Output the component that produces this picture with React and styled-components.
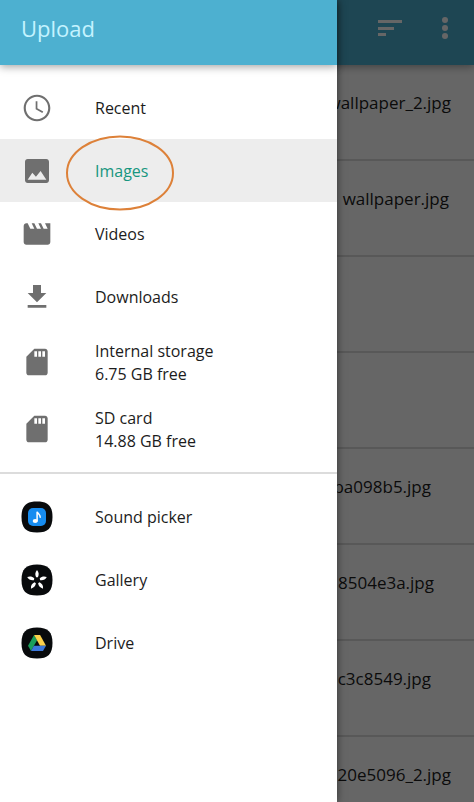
import React from 'react'
import styled, { createGlobalStyle } from 'styled-components'

const GlobalStyle = createGlobalStyle`
  * {
    box-sizing: border-box;
  }

  body {
    margin: 0;
    background: #fff;
    color: #1c1c1c;
    font-family: 'Open Sans', 'Noto Sans', sans-serif;
    font-size: 16px;
  }

  button {
    border: 0;
    padding: 0;
    background: none;
    color: inherit;
    font: inherit;
  }
`

const Screen = styled.div`
  position: relative;
  height: 100vh;
  overflow: hidden;
`

const Bar = styled.header`
  display: flex;
  align-items: center;
  height: 65px;
  padding: 0 20px 9px 21px;
  background: #4db0d0;
  box-shadow: 0 2px 8px rgba(0, 0, 0, 0.35);
  position: relative;
`

const Actions = styled.div`
  display: flex;
  gap: 34px;
  margin-left: auto;
  color: #fff;
`

const IconButton = styled.button`
  display: flex;
  justify-content: center;
  width: ${({ $width }) => $width};
`

const FileList = styled.ul`
  list-style: none;
  margin: 0;
  padding: 0;
`

const FileRow = styled.li`
  height: 96px;
  padding: 26px ${({ $end }) => $end} 0 0;
  border-bottom: 2px solid #dcdcdc;
  font-size: 17px;
  line-height: 24px;
  text-align: right;
`

const Scrim = styled.div`
  position: absolute;
  inset: 0;
  background: rgba(0, 0, 0, 0.6);
`

const Drawer = styled.aside`
  position: absolute;
  top: 0;
  bottom: 0;
  left: 0;
  width: 71.1%;
  background: #fff;
  box-shadow: 0 0 8px rgba(0, 0, 0, 0.5);
`

const Title = styled.h1`
  margin: 0;
  color: #c4f3ff;
  font-size: 22px;
  font-weight: 400;
  line-height: 32px;
`

const Group = styled.nav`
  display: flex;
  flex-direction: column;
  padding: ${({ $pad }) => $pad};

  & + & {
    border-top: 2px solid #dcdcdc;
  }
`

const Item = styled.button`
  display: grid;
  grid-template-columns: 74px 1fr;
  column-gap: 21px;
  align-items: center;
  height: ${({ $tall }) => ($tall ? '67px' : '63px')};
  background: ${({ $active }) => ($active ? '#ededed' : 'transparent')};
  color: ${({ $active }) => ($active ? '#17967f' : '#1c1c1c')};
  line-height: 23px;
  text-align: left;
`

const ItemIcon = styled.span`
  display: flex;
  justify-content: center;
  color: #6f6f6f;
`

const Label = styled.span`
  position: relative;
  justify-self: start;
  padding-top: 2px;
`

const Line = styled.span`
  display: block;
`

const Ring = styled.svg`
  position: absolute;
  top: 50%;
  left: -29px;
  transform: translateY(-50%);
  margin-top: 2px;
  z-index: 1;
  pointer-events: none;
`

const paths = {
  recent:
    'M11.99 2C6.47 2 2 6.48 2 12s4.47 10 9.99 10C17.52 22 22 17.52 22 12S17.52 2 11.99 2zM12 20.4c-4.64 0-8.4-3.76-8.4-8.4S7.36 3.6 12 3.6s8.4 3.76 8.4 8.4-3.76 8.4-8.4 8.4zM12.3 7H11v6l5 2.7.7-1.1-4.4-2.4z',
  images:
    'M21 19V5c0-1.1-.9-2-2-2H5c-1.1 0-2 .9-2 2v14c0 1.1.9 2 2 2h14c1.1 0 2-.9 2-2zM5 18.5l3.5-5.200 2.700 3 3.500-4.300 4.300 6.500z',
  videos:
    'M18 4l2 4h-3l-2-4h-2l2 4h-3l-2-4H8l2 4H7L5 4H4c-1.1 0-1.99.9-1.99 2L2 18c0 1.1.9 2 2 2h16c1.1 0 2-.9 2-2V4h-4z',
  downloads: 'M19 9h-4V3H9v6H5l7 7 7-7zM5 18v2h14v-2H5z',
  storage:
    'M18 2h-8L4.02 8 4 20c0 1.1.9 2 2 2h12c1.1 0 2-.9 2-2V4c0-1.1-.9-2-2-2zm-6 6h-2V4h2v4zm3 0h-2V4h2v4zm3 0h-2V4h2v4z',
}

const Glyph = ({ name }) => (
  <svg width="32" height="32" viewBox="0 0 24 24" fill="currentColor" aria-hidden="true">
    <path d={paths[name]} />
  </svg>
)

const AppTile = ({ children }) => (
  <svg width="32" height="32" viewBox="0 0 32 32" aria-hidden="true">
    <path
      d="M16 .5C27 .5 31.5 5 31.5 16S27 31.5 16 31.5.5 27 .5 16 5 .5 16 .5z"
      fill="#080a0c"
    />
    {children}
  </svg>
)

const SoundIcon = () => (
  <AppTile>
    <rect x="7" y="7" width="18" height="18" rx="5" fill="#168cf0" />
    <ellipse cx="14.2" cy="20" rx="2.5" ry="2.1" fill="#fff" />
    <path
      d="M16.1 20v-9.2c1 2.2 3.2 2.5 3.1 5.5"
      fill="none"
      stroke="#fff"
      strokeWidth="1.5"
      strokeLinecap="round"
    />
  </AppTile>
)

const GalleryIcon = () => (
  <AppTile>
    {[0, 72, 144, 216, 288].map((angle) => (
      <path
        key={angle}
        d="M16 6c1.900 2.200 2.200 4.600.9 7.200h-1.800c-1.300-2.600-1-5 .9-7.200z"
        fill="#fff"
        transform={`rotate(${angle} 16 16.3)`}
      />
    ))}
  </AppTile>
)

const DriveIcon = () => (
  <AppTile>
    <path d="M13.1 8L7 18.8l3 5.2 6.1-10.8z" fill="#1b9f5c" />
    <path d="M13.1 8h6L25 18.8h-6z" fill="#fdd14b" />
    <path d="M12.9 18.8H25L22 24H10z" fill="#3c78dc" />
  </AppTile>
)

const places = [
  { name: 'recent', lines: ['Recent'] },
  { name: 'images', lines: ['Images'], active: true },
  { name: 'videos', lines: ['Videos'] },
  { name: 'downloads', lines: ['Downloads'] },
  { name: 'storage', lines: ['Internal storage', '6.75 GB free'] },
  { name: 'storage', lines: ['SD card', '14.88 GB free'] },
]

const apps = [
  { label: 'Sound picker', Icon: SoundIcon },
  { label: 'Gallery', Icon: GalleryIcon },
  { label: 'Drive', Icon: DriveIcon },
]

const files = [
  { name: 'wallpaper_2.jpg', end: '23px' },
  { name: 'wallpaper.jpg', end: '25px' },
  { name: '', end: '25px' },
  { name: '', end: '25px' },
  { name: 'ba098b5.jpg', end: '43px' },
  { name: '8504e3a.jpg', end: '40px' },
  { name: 'c3c8549.jpg', end: '43px' },
  { name: '20e5096_2.jpg', end: '23px' },
]

const App = () => {
  return (
    <Screen>
      <GlobalStyle />
      <Bar>
        <Actions>
          <IconButton $width="24px" aria-label="Sort">
            <svg width="24" height="24" viewBox="0 0 24 24" fill="currentColor">
              <path d="M0 4h24v3H0zM0 11h16v3H0zM0 17h8v3H0z" />
            </svg>
          </IconButton>
          <IconButton $width="18px" aria-label="More options">
            <svg width="8" height="24" viewBox="0 0 8 24" fill="currentColor">
              <circle cx="4" cy="4" r="3" />
              <circle cx="4" cy="12" r="3" />
              <circle cx="4" cy="20" r="3" />
            </svg>
          </IconButton>
        </Actions>
      </Bar>
      <FileList>
        {files.map((file, i) => (
          <FileRow key={i} $end={file.end}>
            {file.name}
          </FileRow>
        ))}
      </FileList>
      <Scrim />
      <Drawer>
        <Bar>
          <Title>Upload</Title>
        </Bar>
        <Group $pad="11px 0 10px">
          {places.map(({ name, lines, active }) => (
            <Item key={lines[0]} $active={active} $tall={lines.length > 1}>
              <ItemIcon>
                <Glyph name={name} />
              </ItemIcon>
              <Label>
                {lines.map((line) => (
                  <Line key={line}>{line}</Line>
                ))}
                {active && (
                  <Ring width="108" height="76" viewBox="0 0 108 76" aria-hidden="true">
                    <ellipse
                      cx="54"
                      cy="38"
                      rx="53"
                      ry="36.5"
                      fill="none"
                      stroke="#dd8139"
                      strokeWidth="2"
                    />
                  </Ring>
                )}
              </Label>
            </Item>
          ))}
        </Group>
        <Group $pad="11px 0">
          {apps.map(({ label, Icon }) => (
            <Item key={label}>
              <ItemIcon>
                <Icon />
              </ItemIcon>
              <Label>{label}</Label>
            </Item>
          ))}
        </Group>
      </Drawer>
    </Screen>
  )
}

export default App
